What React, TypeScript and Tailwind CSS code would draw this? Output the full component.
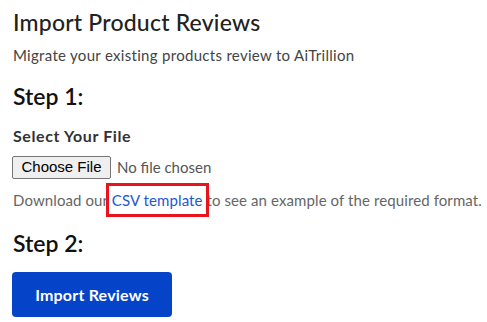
import React from "react";

export default function App() {
  return (
    <div className="w-[487px] h-[322px] bg-white overflow-hidden pl-[13px] pt-[8px]" style={{ fontFamily: "Lato, 'Noto Sans', sans-serif" }}>
      <h1 className="text-[23px] leading-[28px] font-medium tracking-[0.2px] text-[#222]">Import Product Reviews</h1>
      <p className="mt-[9px] text-[15px] leading-[20px] tracking-[0.3px] text-[#444]">Migrate your existing products review to AiTrillion</p>
      <h2 className="mt-[17px] text-[23px] leading-[28px] font-semibold text-[#111]">Step 1:</h2>
      <h3 className="mt-[16px] text-[16px] leading-[20px] font-bold tracking-[0.6px] text-[#333]">Select Your File</h3>
      <div className="mt-[10px] flex items-center gap-[6px] h-[23px]">
        <span
          className="h-[23px] w-[99px] ml-[-1px] flex items-center justify-center border border-[#767676] rounded-[2px] bg-[#efefef] text-[15px] text-black"
          style={{ fontFamily: "'Liberation Sans', Arial, sans-serif" }}
        >
          Choose File
        </span>
        <span className="text-[15px] text-[#555]">No file chosen</span>
      </div>
      <p className="mt-[11px] text-[15px] leading-[20px] tracking-[0.1px] text-[#666]">
        Download our{" "}
        <span className="relative">
          <a href="#" className="text-[#2158d4]">CSV template</a>
          <span className="absolute left-[-6px] right-[-6px] top-[-8px] bottom-[-8px] border-[3px] border-[#e8141b] pointer-events-none" />
        </span>{" "}
        to see an example of the required format.
      </p>
      <h2 className="mt-[19px] text-[23px] leading-[28px] font-semibold text-[#111]">Step 2:</h2>
      <button className="mt-[15px] ml-[-1px] w-[160px] h-[45px] rounded-[4px] bg-[#0544c8] text-white text-[16px] font-bold tracking-[0.2px]">
        Import Reviews
      </button>
    </div>
  );
}
